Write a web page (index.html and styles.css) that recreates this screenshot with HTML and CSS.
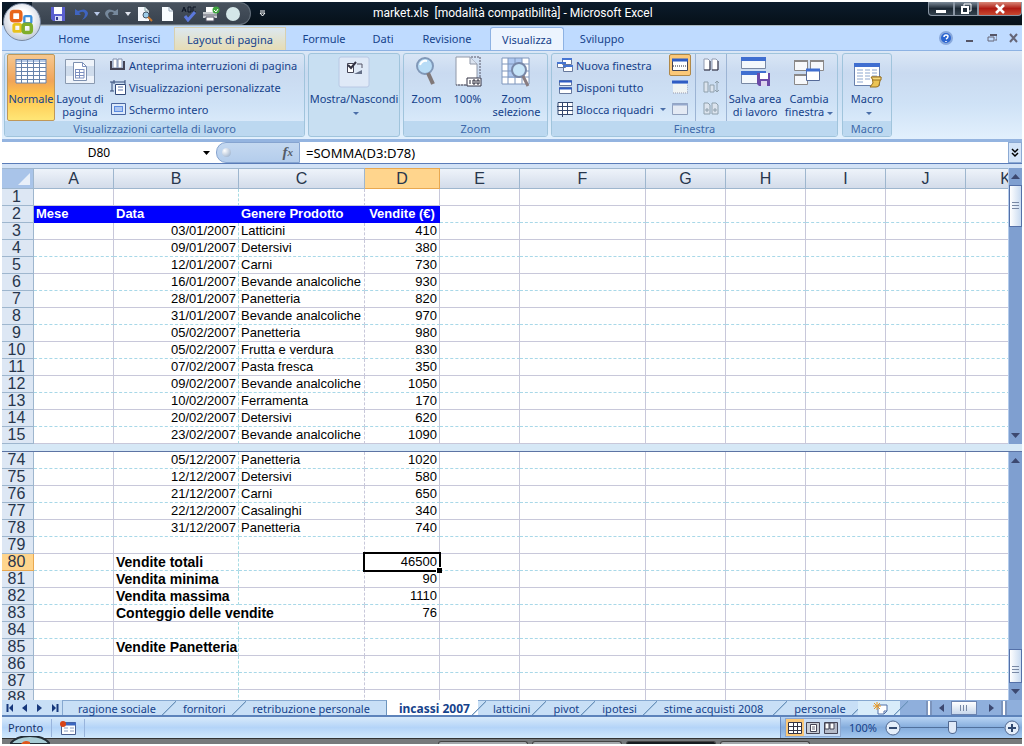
FILE: index.html
```html
<!DOCTYPE html>
<html lang="it">
<head>
<meta charset="utf-8">
<title>market.xls - Microsoft Excel</title>
<link rel="stylesheet" href="styles.css">
</head>
<body>
<header class="titlebar">
  <button class="orb" aria-label="Pulsante Office">
    <svg width="28" height="28" viewBox="0 0 24 24" fill="none"><rect x="3" y="3" width="8" height="8" rx="2" stroke="#e8651a" stroke-width="3"/><rect x="14" y="7" width="6" height="6" rx="1" stroke="#3d8fdc" stroke-width="2"/><rect x="5" y="14" width="6" height="6" rx="1" stroke="#e9c21c" stroke-width="2.500"/><rect x="13" y="14" width="7" height="7" rx="2" stroke="#7fae2b" stroke-width="3"/></svg>
  </button>
  <div class="quick">
    <button class="q-save" aria-label="Salva"><svg width="16" height="16"><path d="M1 1h14v14H3l-2-2z" fill="#5a5fd0"/><path d="M4 1h8v7H4z" fill="#fff"/><path d="M5 10h7v5H5z" fill="#d8dcf8"/><path d="M6 11h2v3H6z" fill="#333a90"/></svg></button>
    <button class="q-undo" aria-label="Annulla"><svg width="16" height="16"><path d="M2 3v6h6L6 7q5-3 6 1 0 3-3 6 6-3 6-7-2-6-10-2z" fill="#3f64c0"/></svg></button>
    <button class="q-drop" aria-label="Elenco annulla"><svg width="6" height="4"><path d="M0 0h6L3 4z" fill="#b8c8e8"/></svg></button>
    <button class="q-undo" aria-label="Ripeti"><svg width="16" height="16"><path d="M14 3v6H8l2-2Q6 4 4 8q0 3 3 6-6-3-6-7 2-6 10-2z" fill="#76889c"/></svg></button>
    <button class="q-drop" aria-label="Elenco ripeti"><svg width="6" height="4"><path d="M0 0h6L3 4z" fill="#e0e4ee"/></svg></button>
    <button class="q-tool" aria-label="Anteprima di stampa"><svg width="16" height="16"><path d="M1 1h7l4 4v10H1z" fill="#f4f8fc"/><path d="M8 1v4h4" fill="none" stroke="#8aa"/><circle cx="9" cy="9" r="3" fill="#9ccce8" stroke="#456"/><path d="M11 11l4 4" stroke="#c87830" stroke-width="2"/></svg></button>
    <button class="q-tool" aria-label="Nuovo"><svg width="16" height="16"><path d="M3 1h7l4 4v10H3z" fill="#f8fcff"/><path d="M10 1v4h4" fill="none" stroke="#9ab"/></svg></button>
    <button class="q-tool" aria-label="Controllo ortografia"><svg width="18" height="16"><path d="M2 6l2-5 2 5M3 4h3M8 1v5h3V1zM16 1h-3v5h3" fill="none" stroke="#0c1424"/><path d="M5 10l3 4 7-8" fill="none" stroke="#5b78dc" stroke-width="3"/></svg></button>
    <button class="q-tool" aria-label="Stampa"><svg width="18" height="16"><path d="M4 1h8v5H4z" fill="#fff"/><path d="M1 6h14v6H1z" fill="#c8ccd0"/><path d="M1 9h14" stroke="#667"/><path d="M4 11h8v4H4z" fill="#fff" stroke="#556"/><circle cx="14" cy="4" r="3.500" fill="#3da43d"/><path d="M12 4l2 2 2-3" fill="none" stroke="#fff"/></svg></button>
    <button class="q-tool" aria-label="Cerchio"><svg width="16" height="16"><circle cx="8" cy="8" r="7" fill="#d4e6e8"/></svg></button>
  </div>
  <button class="q-more" aria-label="Personalizza"><svg width="7" height="7"><path d="M1 1h5" stroke="#fff"/><path d="M1 3h5L3.500 6z" fill="none" stroke="#fff"/></svg></button>
  <h1>market.xls&nbsp; [modalità compatibilità] - Microsoft Excel</h1>
  <div class="winbtns">
    <button class="wmin" aria-label="Riduci a icona"><svg width="12" height="10"><path d="M1 6h10v3H1z" fill="#fff"/></svg></button>
    <button class="wmax" aria-label="Ripristina"><svg width="12" height="12"><path d="M4 3V1h7v7H9" fill="none" stroke="#fff"/><path d="M2 4h6v6H2z" fill="none" stroke="#fff" stroke-width="2"/></svg></button>
    <button class="wclose" aria-label="Chiudi"><svg width="12" height="10"><path d="M2 1l8 8M10 1L2 9" stroke="#fff" stroke-width="2.500"/></svg></button>
  </div>
</header>

<nav class="tabs">
  <button>Home</button><button>Inserisci</button><button class="hot">Layout di pagina</button><button>Formule</button><button>Dati</button><button>Revisione</button><button class="on">Visualizza</button><button>Sviluppo</button>
  <div class="docbtns">
    <button aria-label="Guida"><svg width="14" height="14"><circle cx="7" cy="7" r="6" fill="#2c66d0" stroke="#88a8dc" stroke-width="2"/><path d="M5 6q0-2 2-2t2 1.500-2 2.500M7 10v1" fill="none" stroke="#fff" stroke-width="1.500"/></svg></button>
    <button aria-label="Riduci finestra"><svg width="10" height="12"><path d="M1 9h7" stroke="#556" stroke-width="2"/></svg></button>
    <button aria-label="Ripristina finestra"><svg width="10" height="12"><path d="M3 3h7v5H8M1 5h6v4H1z" fill="none" stroke="#667"/><path d="M3 3h7" stroke="#556" stroke-width="2"/></svg></button>
    <button aria-label="Chiudi finestra"><svg width="10" height="12"><path d="M1 2l7 8M8 2l-7 8" stroke="#667" stroke-width="2"/></svg></button>
  </div>
</nav>

<section class="ribbon">
  <div class="group g-views">
    <div class="body">
      <button class="big pressed"><svg width="32" height="32"><path d="M1 3h30v24H1z" fill="#fff"/><path d="M1 3h30v3H1z" fill="#b8cce8"/><path d="M1 3.500h30M1 7.500h30M1 11.500h30M1 15.500h30M1 19.500h30M1 23.500h30M1 27h30M1 3v24M6.500 3v24M12.500 3v24M18.500 3v24M24.500 3v24M31 3v24" stroke="#6884ac"/></svg><span>Normale</span></button>
      <button class="big"><svg width="32" height="32"><path d="M1.500 3.500h29v24h-29z" fill="#eef3fa" stroke="#8a9ab0"/><path d="M2 10h28v10H2z" fill="#cfdcec"/><path d="M9.500 6.500h9l4 4v14h-13z" fill="#fff" stroke="#7d90b0"/><path d="M18.500 6.500v4h4M11 13.500h9M11 16.500h9M11 19.500h9M11 22h9M11.500 13v9M15.500 13v9M20 13v9" fill="none" stroke="#7d90c0"/></svg><span>Layout di<br>pagina</span></button>
      <div class="stack">
        <button><svg width="16" height="16"><path d="M3 2h4v9H3zM8 2h4v9H8z" fill="#fff" stroke="#8090b0"/><path d="M1 4v8h13V4" fill="none" stroke="#445" stroke-width="2"/></svg>Anteprima interruzioni di pagina</button>
        <button><svg width="16" height="16"><path d="M0 3h4M2 3v9M0 12h4M4 1v4M15 1v4M4 3h11" stroke="#334a78" fill="none"/><path d="M5.500 5.500h10v10h-10z" fill="#fff" stroke="#334a78"/><path d="M8 8h5M8 11h5" stroke="#5a74ac"/></svg>Visualizzazioni personalizzate</button>
        <button><svg width="16" height="16"><path d="M1.500 2.500h14v11h-14z" fill="#dce9fa" stroke="#4a66a0"/><path d="M4 5h9v6H4z" fill="#5b8be0"/><path d="M5 7h7M5 9h7" stroke="#fff"/></svg>Schermo intero</button>
      </div>
    </div>
    <h2>Visualizzazioni cartella di lavoro</h2>
  </div>
  <div class="group g-show">
    <div class="body">
      <button class="big"><svg width="32" height="32"><rect x="1" y="1" width="30" height="30" rx="2" fill="#dfe9f7" stroke="#b8c8e4"/><path d="M9.500 7.500h6v9h-6z" fill="#fff" stroke="#445"/><path d="M10 9l3 3 5-6" fill="none" stroke="#334" stroke-width="2"/><path d="M16 18h8v-4l-4 2z" fill="#667088"/><path d="M19 8h5v4" fill="none" stroke="#556"/></svg><span>Mostra/Nascondi<br><i class="arrow"></i></span></button>
    </div>
  </div>
  <div class="group g-zoom">
    <div class="body">
      <button class="big"><svg width="32" height="32"><circle cx="15" cy="10" r="8" fill="#b8dcf6" stroke="#8098b8" stroke-width="2"/><path d="M10 9q2-5 7-4" fill="none" stroke="#fff" stroke-width="2"/><path d="M18 17l5 11" stroke="#807878" stroke-width="4"/></svg><span>Zoom</span></button>
      <button class="big"><svg width="32" height="32"><path d="M5 1h14l7 7v21H5z" fill="#fff" stroke="#9098a8"/><path d="M19 1v7h7" fill="#dce4f0" stroke="#9098a8"/><path d="M20 1h9v28H5" fill="none" stroke="#556" stroke-dasharray="2 1"/><path d="M16 22h14v8H16z" fill="#fff" stroke="#334"/><path d="M19 24v4M22 24v4h2v-4zM26 24v4h2v-4z" fill="none" stroke="#223"/></svg><span>100%</span></button>
      <button class="big"><svg width="32" height="32"><path d="M2 2h27v26H2z" fill="#fff"/><path d="M8 2h14v20H8z" fill="#aec8f0"/><path d="M2 2h27v26H2zM2 8h27M2 15h27M2 21h27M8 2v26M15 2v26M22 2v26" fill="none" stroke="#7e96bc"/><circle cx="19" cy="14" r="7" fill="#c6e4f8" stroke="#7888a8" stroke-width="2"/><path d="M23 20l5 10" stroke="#887c80" stroke-width="3"/></svg><span>Zoom<br>selezione</span></button>
    </div>
    <h2>Zoom</h2>
  </div>
  <div class="group g-window">
    <div class="body">
      <div class="stack">
        <button><svg width="16" height="16"><path d="M5.500 1.500h9v6h-9zM.5 5.500h8v5h-8zM6.500 8.500h9v6h-9z" fill="#fff" stroke="#66789c"/><path d="M5 2h10M0 6h9M6 9h10" stroke="#4675d2" stroke-width="2"/></svg>Nuova finestra</button>
        <button><svg width="16" height="16"><path d="M2.500 1.500h12v5h-12zM2.500 8.500h12v6h-12z" fill="#fff" stroke="#66789c"/><path d="M2 2.500h13M2 9.500h13" stroke="#2f5cc4" stroke-width="2"/></svg>Disponi tutto</button>
        <button><svg width="16" height="16"><path d="M1 1.500h15v12H1z" fill="#fff"/><path d="M1 1.500h15v12H1zM0 5.500h16M1 9.500h15M5.500 1v15M10.500 1v12" fill="none" stroke="#33476e"/></svg>Blocca riquadri<i class="arrow"></i></button>
      </div>
      <div class="stack icons">
        <button class="lit" aria-label="Dividi"><svg width="16" height="14"><path d="M.5 1.500h15v11H.5z" fill="#fff" stroke="#445"/><path d="M0 2h16" stroke="#2f5cc4" stroke-width="3"/><path d="M1 8h14" stroke="#223" stroke-dasharray="1 1"/></svg></button>
        <button aria-label="Nascondi"><svg width="16" height="14"><path d="M1 4h14v9H1z" fill="#f0f4f4"/><path d="M0 2h16" stroke="#2f5cc4" stroke-width="3"/><path d="M1 13h15V4" fill="none" stroke="#99a" stroke-dasharray="1 1"/></svg></button>
        <button aria-label="Scopri"><svg width="16" height="14"><path d="M.5 1.500h15v11H.5z" fill="#e4eaf4" stroke="#90a0bc"/><path d="M0 2.500h16" stroke="#94a8cc" stroke-width="2"/></svg></button>
      </div>
      <div class="stack icons ruled">
        <button aria-label="Affianca"><svg width="16" height="14"><path d="M1 1h4l2 2v9H1zM9 1h4l2 2v9H9z" fill="#fff" stroke="#909ab0"/><path d="M7 3v9H1M15 3v9H9" fill="none" stroke="#334"/></svg></button>
        <button aria-label="Scorrimento sincrono"><svg width="16" height="14"><path d="M1 2h4v10H1zM7 5h4v7H7z" fill="#dce4ee" stroke="#8fa0ac"/><path d="M14 1v11M12 3l2-2 2 2M12 10l2 2 2-2" fill="none" stroke="#8fa0ac"/></svg></button>
        <button aria-label="Reimposta posizione"><svg width="16" height="14"><path d="M1 1h4l2 2v9H1zM9 1h4l2 2v9H9z" fill="#dce4ee" stroke="#8fa0ac"/><path d="M2 8h4M4 6v4M10 8h4M12 6v4" stroke="#8fa0ac"/></svg></button>
      </div>
      <button class="big"><svg width="32" height="32"><path d="M2.500 1.500h24v11h-24zM2.500 15.500h24v12h-24z" fill="#f4f8fc" stroke="#7888a4"/><path d="M2 3h25M2 17h25" stroke="#3f6ed0" stroke-width="4"/><path d="M18 17h13v13H20l-2-2z" fill="#6b4aa8"/><path d="M21 17h8v6h-8z" fill="#fff"/><path d="M22 25h6v5h-6z" fill="#dcd4ee"/></svg><span>Salva area<br>di lavoro</span></button>
      <button class="big"><svg width="32" height="32"><path d="M1.500 4.500h13v10h-13zM17.500 4.500h13v10h-13zM1.500 18.500h13v10h-13z" fill="#f6f8fb" stroke="#8a8888"/><path d="M1 5h14M17 5h14M1 19h14" stroke="#8a8888" stroke-width="2"/><path d="M13.500 13.500h13v11h-13z" fill="#fff" stroke="#556a98"/><path d="M13 14h14" stroke="#3f6ed0" stroke-width="3"/></svg><span>Cambia<br>finestra<i class="arrow"></i></span></button>
    </div>
    <h2>Finestra</h2>
  </div>
  <div class="group g-macro">
    <div class="body">
      <button class="big"><svg width="32" height="32"><path d="M3.500 7.500h25v22h-25z" fill="#fff" stroke="#6880ac"/><path d="M3 9h26" stroke="#3f6ed0" stroke-width="4"/><path d="M6 14h6M6 17h6M6 20h6M6 23h6M6 26h6M14 14h5M14 17h5M14 20h5M14 23h5M21 14h5M21 17h5M21 20h5" stroke="#8ba6cf"/><path d="M21 21h9l-2 8q0 2-3 2h-6l3-4z" fill="#ecc454" stroke="#987020"/><path d="M20 21h10v3h-8z" fill="#f5d97c" stroke="#987020"/></svg><span>Macro<br><i class="arrow"></i></span></button>
    </div>
    <h2>Macro</h2>
  </div>
</section>

<div class="formulabar">
  <input class="name" aria-label="Casella nome" value="D80">
  <button class="namedrop" aria-label="Elenco nomi"><svg width="7" height="4"><path d="M0 0h7L3.500 4z"/></svg></button>
  <div class="fx"><span class="knob"></span><button aria-label="Inserisci funzione">f<sub>x</sub></button></div>
  <input class="formula" aria-label="Barra della formula" value="=SOMMA(D3:D78)">
  <button class="expand" aria-label="Espandi"><svg width="8" height="10"><path d="M1 1l3 3 3-3M1 5l3 3 3-3" fill="none" stroke="#000" stroke-width="1.500"/></svg></button>
</div>

<main class="sheet">
  <div class="pane top">
    <div class="clip">
    <table>
      <colgroup><col class="rh"><col class="c80"><col class="c125"><col class="c126"><col class="c75"><col class="c80"><col class="c126"><col class="c80"><col class="c80"><col class="c80"><col class="c80"><col class="c80"></colgroup>
      <thead><tr><th class="corner"><svg width="12" height="12"><path d="M12 0v12H0z" fill="#e8eff9"/></svg><th>A<th>B<th>C<th class="sel">D<th>E<th>F<th>G<th>H<th>I<th>J<th>K</thead>
      <tbody>
      <tr><th>1<td><td><td><td><td><td><td><td><td><td><td>
      <tr class="heads"><th>2<td>Mese<td>Data<td>Genere Prodotto<td>Vendite (€)<td><td><td><td><td><td><td>
      <tr><th>3<td><td>03/01/2007<td>Latticini<td>410<td><td><td><td><td><td><td>
      <tr><th>4<td><td>09/01/2007<td>Detersivi<td>380<td><td><td><td><td><td><td>
      <tr><th>5<td><td>12/01/2007<td>Carni<td>730<td><td><td><td><td><td><td>
      <tr><th>6<td><td>16/01/2007<td>Bevande analcoliche<td>930<td><td><td><td><td><td><td>
      <tr><th>7<td><td>28/01/2007<td>Panetteria<td>820<td><td><td><td><td><td><td>
      <tr><th>8<td><td>31/01/2007<td>Bevande analcoliche<td>970<td><td><td><td><td><td><td>
      <tr><th>9<td><td>05/02/2007<td>Panetteria<td>980<td><td><td><td><td><td><td>
      <tr><th>10<td><td>05/02/2007<td>Frutta e verdura<td>830<td><td><td><td><td><td><td>
      <tr><th>11<td><td>07/02/2007<td>Pasta fresca<td>350<td><td><td><td><td><td><td>
      <tr><th>12<td><td>09/02/2007<td>Bevande analcoliche<td>1050<td><td><td><td><td><td><td>
      <tr><th>13<td><td>10/02/2007<td>Ferramenta<td>170<td><td><td><td><td><td><td>
      <tr><th>14<td><td>20/02/2007<td>Detersivi<td>620<td><td><td><td><td><td><td>
      <tr><th>15<td><td>23/02/2007<td>Bevande analcoliche<td>1090<td><td><td><td><td><td><td>
      </tbody>
    </table>
    </div>
    <div class="vscroll"><button aria-label="Su"><svg width="9" height="5"><path d="M0 5h9L4.500 0z" fill="#3c4870"/></svg></button><div class="thumb"></div><button class="down" aria-label="Giù"><svg width="9" height="5"><path d="M0 0h9L4.500 5z" fill="#3c4870"/></svg></button></div>
  </div>
  <div class="splitbar"></div>
  <div class="pane bottom">
    <div class="clip">
    <table>
      <colgroup><col class="rh"><col class="c80"><col class="c125"><col class="c126"><col class="c75"><col class="c80"><col class="c126"><col class="c80"><col class="c80"><col class="c80"><col class="c80"><col class="c80"></colgroup>
      <tbody class="evenfirst">
      <tr><th>74<td><td>05/12/2007<td>Panetteria<td>1020<td><td><td><td><td><td><td>
      <tr><th>75<td><td>12/12/2007<td>Detersivi<td>580<td><td><td><td><td><td><td>
      <tr><th>76<td><td>21/12/2007<td>Carni<td>650<td><td><td><td><td><td><td>
      <tr><th>77<td><td>22/12/2007<td>Casalinghi<td>340<td><td><td><td><td><td><td>
      <tr><th>78<td><td>31/12/2007<td>Panetteria<td>740<td><td><td><td><td><td><td>
      <tr><th>79<td><td><td><td><td><td><td><td><td><td><td>
      <tr class="sum"><th class="sel">80<td><td>Vendite totali<td><td class="active">46500<td><td><td><td><td><td><td>
      <tr class="sum"><th>81<td><td>Vendita minima<td><td>90<td><td><td><td><td><td><td>
      <tr class="sum"><th>82<td><td>Vendita massima<td><td>1110<td><td><td><td><td><td><td>
      <tr class="sum"><th>83<td><td class="wide">Conteggio delle vendite<td><td>76<td><td><td><td><td><td><td>
      <tr><th>84<td><td><td><td><td><td><td><td><td><td><td>
      <tr class="sum"><th>85<td><td>Vendite Panetteria<td><td><td><td><td><td><td><td><td>
      <tr><th>86<td><td><td><td><td><td><td><td><td><td><td>
      <tr><th>87<td><td><td><td><td><td><td><td><td><td><td>
      <tr><th>88<td><td><td><td><td><td><td><td><td><td><td>
      </tbody>
    </table>
    </div>
    <div class="vscroll"><button aria-label="Su"><svg width="9" height="5"><path d="M0 5h9L4.500 0z" fill="#3c4870"/></svg></button><div class="thumb low"></div><button aria-label="Giù"><svg width="9" height="5"><path d="M0 0h9L4.500 5z" fill="#3c4870"/></svg></button></div>
  </div>
</main>

<nav class="sheettabs">
  <div class="steps">
    <button aria-label="Primo foglio"><svg width="8" height="8"><path d="M1.500 0v8" stroke="#17387c" stroke-width="2"/><path d="M7 0v8L3 4z" fill="#17387c"/></svg></button>
    <button aria-label="Foglio precedente"><svg width="8" height="8"><path d="M6 0v8L1 4z" fill="#17387c"/></svg></button>
    <button aria-label="Foglio successivo"><svg width="8" height="8"><path d="M1 0v8l5-4z" fill="#17387c"/></svg></button>
    <button aria-label="Ultimo foglio"><svg width="8" height="8"><path d="M6.500 0v8" stroke="#17387c" stroke-width="2"/><path d="M1 0v8l4-4z" fill="#17387c"/></svg></button>
  </div>
  <button class="tab first">ragione sociale</button>
  <button class="tab">fornitori</button>
  <button class="tab before">retribuzione personale</button>
  <button class="tab current">incassi 2007</button>
  <button class="tab tight">latticini</button>
  <button class="tab tight">pivot</button>
  <button class="tab">ipotesi</button>
  <button class="tab roomy">stime acquisti 2008</button>
  <button class="tab">personale</button>
  <button class="tab new" aria-label="Inserisci foglio"><svg width="15" height="13"><path d="M5 3h9v6l-3 3H5z" fill="#fff" stroke="#5070a8"/><path d="M11 12V9h3" fill="none" stroke="#5070a8"/><path d="M4 0v8M0 4h8M1 1l6 6M7 1L1 7" stroke="#e89a24"/></svg></button>
  <div class="hscroll">
    <span class="grip"></span>
    <button aria-label="Sinistra"><svg width="5" height="8"><path d="M5 0v8L0 4z" fill="#3c4870"/></svg></button>
    <div class="hthumb"></div>
    <button class="right" aria-label="Destra"><svg width="5" height="8"><path d="M0 0v8l5-4z" fill="#3c4870"/></svg></button>
    <span class="grip"></span>
  </div>
</nav>

<footer class="status">
  <span class="ready">Pronto</span>
  <button class="record" aria-label="Registra macro"><svg width="16" height="14"><path d="M1.500 1.500h14v12h-14z" fill="#fff" stroke="#4a6090"/><path d="M1 3h15" stroke="#3a66c0" stroke-width="3"/><path d="M4 7h4M4 10h4M10 7h4M10 10h4" stroke="#889cc0"/><circle cx="3" cy="3" r="3" fill="#d84418"/></svg></button>
  <div class="right-side">
    <div class="views">
      <button class="lit" aria-label="Normale"><svg width="14" height="12"><path d="M.5.500h13v11H.5z" fill="#fff"/><path d="M.5.500h13v11H.5zM0 4.500h14M0 8.500h14M5.500 0v12M9.500 0v12" fill="none" stroke="#334"/></svg></button>
      <button aria-label="Layout di pagina"><svg width="14" height="12"><path d="M.5.500h13v11H.5z" fill="#c8ccd4" stroke="#445"/><path d="M4.500 2.500h6v7h-6z" fill="#fff" stroke="#445"/><path d="M6 5h3M6 7h3" stroke="#667"/></svg></button>
      <button aria-label="Anteprima interruzioni"><svg width="14" height="12"><path d="M.5.500h13v11H.5z" fill="#b4bac8" stroke="#445"/><path d="M1 1h4v6H1zM6 1h4v6H6z" fill="#fff" stroke="#445"/></svg></button>
    </div>
    <span class="pct">100%</span>
    <button class="round" aria-label="Zoom indietro"><svg width="16" height="16"><circle cx="8" cy="8" r="7" fill="#e4eefa" stroke="#506890"/><path d="M4 8h8" stroke="#334a70" stroke-width="2"/></svg></button>
    <input class="slider" type="range" min="0" max="100" value="50" aria-label="Zoom">
    <button class="round" aria-label="Zoom avanti"><svg width="16" height="16"><circle cx="8" cy="8" r="7" fill="#e4eefa" stroke="#506890"/><path d="M4 8h8M8 4v8" stroke="#334a70" stroke-width="2"/></svg></button>
  </div>
</footer>
<div class="taskbar">
  <svg class="start" width="40" height="8"><path d="M0 8Q6 0 20 0t20 8z" fill="#a8ccd4" stroke="#222c34" stroke-width="2"/><path d="M11 8q3-5 9-2v2z" fill="#e0561c"/></svg>
  <span></span><span></span><span class="dark"></span><span></span>
</div>
</body>
</html>
```

FILE: styles.css
```css
* { box-sizing: border-box; }
body {
  margin: 0;
  padding: 2px;
  height: 100vh;
  display: flex;
  flex-direction: column;
  background: #fff;
  font: 11px/13px "Noto Sans", "Open Sans", sans-serif;
  color: #15428b;
  overflow: hidden;
}
button {
  padding: 0;
  border: 0;
  background: none;
  font: inherit;
  color: inherit;
  display: flex;
  align-items: center;
  justify-content: center;
}
h1, h2 { margin: 0; font: inherit; }
svg { display: block; flex: none; }

.titlebar {
  position: relative;
  height: 24px;
  flex: none;
  display: flex;
  align-items: flex-start;
  background: linear-gradient(#0c1c2c, #061018);
  border-bottom: 1px solid #a9b8c0;
}
.orb {
  position: absolute;
  left: 1px;
  top: 1px;
  z-index: 2;
  width: 38px;
  height: 38px;
  border-radius: 50%;
  border: 1px solid #7888a0;
  background: radial-gradient(circle at 50% 40%, #fff 30%, #d4dae4 65%, #a8b4c8);
}
.quick {
  margin-left: 30px;
  padding-left: 18px;
  width: 219px;
  height: 23px;
  display: flex;
  align-items: center;
  background: linear-gradient(#48525e, #38424e);
  border: 1px solid #65707c;
  border-left: 0;
  border-radius: 0 12px 12px 0;
}
.q-save { width: 22px; justify-content: flex-start; }
.q-undo { width: 18px; }
.q-drop { width: 13px; }
.q-tool { width: 22px; }
.q-more { width: 22px; height: 22px; }
.titlebar h1 {
  flex: 1;
  padding-left: 100px;
  color: #fff;
  font-size: 12px;
  font-family: Roboto, "Noto Sans", sans-serif;
  line-height: 23px;
  white-space: nowrap;
}
.winbtns { display: flex; }
.winbtns button { height: 14px; border: 1px solid #8a96a4; border-top: 0; background: linear-gradient(#7c8a98, #1c2834 50%, #34424e); }
.winbtns .wmin { width: 26px; border-radius: 0 0 0 4px; }
.winbtns .wmax { width: 24px; }
.winbtns .wclose { width: 44px; border-radius: 0 0 4px 0; background: linear-gradient(#d88878, #b01c14 50%, #c84830); }

.tabs {
  flex: none;
  height: 24px;
  padding-left: 42px;
  display: grid;
  grid-template-columns: 60px 70px 112px 76px 42px 86px 74px 76px 1fr;
  background: #bfdbff;
}
.tabs > button { margin-top: 1px; height: 23px; white-space: nowrap; }
.tabs .hot { border: 1px solid #d8d0b0; border-bottom: 0; background: linear-gradient(#dce8f0, #e6dcb4); }
.tabs .on { border: 1px solid #8db2e3; border-bottom: 0; border-radius: 3px 3px 0 0; background: #ecf4fe; }
.docbtns { display: flex; justify-content: flex-end; align-items: center; gap: 12px; padding-right: 3px; }

.ribbon {
  flex: none;
  display: flex;
  align-items: stretch;
  gap: 3px;
  height: 89px;
  padding: 2px;
  border-top: 1px solid #8db2e3;
  background: linear-gradient(#dbe7f6, #c9daf0 25%, #cfe2f6 60%, #e2f0fd);
}
.group {
  display: flex;
  flex-direction: column;
  border: 1px solid #a0c4dc;
  border-radius: 3px;
  overflow: hidden;
}
.group .body { flex: 1; display: flex; padding: 0 2px; }
.group h2 { height: 15px; line-height: 15px; text-align: center; background: #bcd8f0; color: #3e6aaa; }
.g-views { width: 301px; }
.g-show { width: 92px; background: #c8dff2; }
.g-zoom { width: 145px; }
.g-window { width: 287px; }
.g-macro { width: 50px; margin-left: 1px; }
.big {
  flex-direction: column;
  justify-content: flex-start;
  padding-top: 2px;
  gap: 4px;
  height: 67px;
  flex: 1 0 auto;
  text-align: center;
  white-space: nowrap;
}
.g-show .body { padding: 0; }
.g-views .big { flex: none; width: 50px; }
.g-views .pressed { width: 48px; border: 1px solid #c09858; border-radius: 2px; background: linear-gradient(#f6c890, #f0a458 40%, #ffc24a 60%, #ffe676); padding-top: 1px; }
.arrow { display: inline-block; border: 3px solid transparent; border-top-color: #4a6ea8; border-bottom: 0; vertical-align: middle; margin-left: 3px; }
.stack { display: flex; flex-direction: column; }
.stack button { height: 22px; gap: 3px; justify-content: flex-start; white-space: nowrap; }
.g-views .stack { margin-left: 5px; }
.g-window .stack:first-child { width: 112px; margin-left: 3px; }
.icons button { width: 22px; justify-content: center; }
.icons .lit { border: 1px solid #b08848; background: #fbc878; border-radius: 2px; }
.icons.ruled { border: solid #9cb4d4; border-width: 0 1px; padding: 0 4px; margin-left: 4px; }

.formulabar {
  flex: none;
  display: flex;
  height: 25px;
  border-top: 3px solid #94b4e0;
  border-bottom: 1px solid #5a7cb8;
  background: #fff;
  font-size: 13px;
}
.formulabar input { border: 0; padding: 0; background: none; font: inherit; color: #000; outline: 0; }
.formulabar .name { width: 194px; text-align: center; font-size: 12px; }
.namedrop { width: 20px; }
.fx {
  width: 84px;
  display: flex;
  align-items: center;
  justify-content: space-between;
  padding: 0 6px 0 5px;
  border: 1px solid #86a4d0;
  border-radius: 10px 0 0 10px;
  background: linear-gradient(#c4d8f0, #b4cdec);
}
.knob { width: 9px; height: 9px; border-radius: 50%; background: radial-gradient(circle at 30% 30%, #fff, #8ca4c4); }
.fx button { font: italic bold 15px/15px "Liberation Serif", serif; color: #555c68; }
.fx sub { font-size: 11px; }
.formulabar .formula { flex: 1; padding-left: 6px; }
.expand { width: 14px; border: 1px solid #8caad4; background: #d4e4f8; }

.sheet {
  flex: 1;
  min-height: 0;
  display: flex;
  flex-direction: column;
  padding-top: 4px;
  background: #d2e2f6;
}
.pane { display: flex; flex: none; }
.pane.bottom { flex: 1; min-height: 0; }
.clip { flex: 1; min-width: 0; overflow: hidden; background: #fff; }
table {
  width: 1044px;
  min-width: 100%;
  table-layout: fixed;
  border-spacing: 0;
  font: 13px/16px "Liberation Sans", Arial, sans-serif;
  color: #000;
}
.rh { width: 32px; }
.c75 { width: 75px; }
.c80 { width: 80px; }
.c125 { width: 125px; }
.c126 { width: 126px; }
td, th {
  height: 17px;
  padding: 0 2px;
  border: solid #c8c8da;
  border-width: 0 1px 1px 0;
  white-space: nowrap;
}
td:nth-child(4), td:nth-child(3) { border-right-style: dashed; }
td:nth-child(3) { border-right-color: #a8dce4; text-align: right; }
td:nth-child(5) { text-align: right; }
tbody:not(.evenfirst) tr:nth-child(even) td,
.evenfirst tr:nth-child(odd) td { border-bottom: 1px dashed #a8d8e8; }
th {
  padding: 0;
  font-weight: 400;
  font-size: 16px;
  text-align: center;
  color: #27364c;
  background: #dde7f4;
  border-color: #9eb6ce;
}
tbody th { padding-right: 2px; }
thead th { height: 21px; border-top: 1px solid #9eb6ce; background: linear-gradient(#eef3fa, #d3dcea); }
thead .corner { background: #a9c4e9; vertical-align: bottom; }
.corner svg { margin: 0 3px 3px auto; }
tbody th.sel, thead th.sel { background: #ffd58d; border-color: #e8a850; }
.heads td { font-weight: 700; text-align: left; }
.heads td:nth-child(-n+5) { background: #00f; color: #fff; border-color: #00f !important; }
.heads td:nth-child(5) { text-align: center; }
.sum td:nth-child(3) { font-weight: 700; font-size: 14px; text-align: left; }
.sum td.wide { overflow: visible; border-right-color: transparent; }
.active { position: relative; }
.active::after {
  content: "";
  position: absolute;
  inset: -2px;
  border: 2px solid #000;
}
.active::before {
  content: "";
  position: absolute;
  right: -3px;
  bottom: -3px;
  width: 5px;
  height: 5px;
  background: #000;
  border: solid #fff;
  border-width: 1px 0 0 1px;
  z-index: 1;
}
.vscroll {
  width: 14px;
  flex: none;
  display: flex;
  flex-direction: column;
  background: #7f9fd0;
  border-left: 1px solid #b4ccec;
}
.vscroll button { height: 17px; }
.vscroll .down, .vscroll .low { margin-top: auto; }
.thumb {
  height: 42px;
  border: 1px solid #5470a8;
  background: linear-gradient(#7888a4, #7888a4) center 16px / 7px 1px no-repeat,
    linear-gradient(#7888a4, #7888a4) center 19px / 7px 1px no-repeat,
    linear-gradient(#7888a4, #7888a4) center 22px / 7px 1px no-repeat,
    linear-gradient(90deg, #fff, #c8daf0);
}
.thumb.low { height: 34px; }
.splitbar { height: 8px; flex: none; background: #d6e8f6; border-bottom: 1px solid #5c74a4; }

.sheettabs {
  flex: none;
  height: 17px;
  display: flex;
  border-bottom: 2px solid #5d83bb;
  background: #c8dff6;
}
.steps { width: 60px; flex: none; display: flex; align-items: center; justify-content: space-around; }
.tab {
  position: relative;
  flex: none;
  padding-left: 15px;
  padding-right: 12px;
  border-top: 1px solid #86a8d0;
  white-space: nowrap;
}
.tab::after {
  content: "";
  position: absolute;
  right: -8px;
  top: 0;
  width: 14px;
  height: 14px;
  background: linear-gradient(to bottom right, transparent 48%, #6c94bc 49%, #6c94bc 53%, transparent 54%);
}
.tab.first { border-left: 1px solid #86a8d0; }
.tab.tight { padding-right: 8px; }
.tab.roomy { padding-right: 16px; }
.tab.before { border-right: 1px solid #6c94bc; padding-right: 16px; }
.tab.before::after { display: none; }
.tab.current { background: #fff; border-top-color: #fff; font-size: 12px; font-weight: 700; padding: 0 8px 0 12px; }
.new { background: #d8ecfa; }
.hscroll { flex: 1; display: flex; align-items: center; padding: 0 15px 0 26px; background: #8fafdc; }
.grip { width: 6px; height: 14px; background: #fff; border: solid #7c94bc; border-width: 0 2px; }
.hscroll button { width: 19px; }
.hscroll .right { margin-left: auto; }
.hthumb { width: 26px; height: 14px; border: 1px solid #6c84b0; background: repeating-linear-gradient(90deg, #7888a4 0 1px, transparent 1px 3px) center / 8px 6px no-repeat, linear-gradient(#fff, #c8d8ec); }

.status {
  flex: none;
  height: 21px;
  display: flex;
  align-items: center;
  background: linear-gradient(#d8eafa, #b4d4f8 50%, #d0e8fc);
  padding-left: 6px;
}
.ready { width: 43px; color: #16346c; }
.record { width: 34px; height: 18px; border: solid #98b4dc; border-width: 0 1px; }
.right-side {
  margin-left: auto;
  width: 242px;
  height: 21px;
  display: flex;
  align-items: center;
  padding: 0 2px 0 4px;
  border-left: 1px solid #6c8cc0;
  background: linear-gradient(#b8d4f4, #84acdc 50%, #a4c8f0);
}
.views { display: flex; border: 1px solid #8ca8d0; background: #c8dcf4; }
.views button { width: 18px; height: 17px; }
.views .lit { background: #fbc878; }
.pct { width: 44px; text-align: center; }
.slider { flex: 1; min-width: 0; margin: 0; height: 16px; appearance: none; background: linear-gradient(#50709c, #50709c) center / 100% 1px no-repeat; }
.slider::-webkit-slider-thumb { appearance: none; width: 9px; height: 13px; background: #e0eaf8; border: 1px solid #506890; border-radius: 1px 1px 5px 5px; }
.taskbar { position: relative; flex: none; height: 6px; display: flex; gap: 4px; padding: 2px 0 0 436px; background: #777a7c; border-top: 1px solid #333; }
.taskbar span { width: 90px; background: #a4a8ac; border-radius: 3px 3px 0 0; border: 1px solid #444; border-bottom: 0; }
.taskbar .dark { background: #181c20; }
.start { position: absolute; left: 8px; top: -3px; }
```
